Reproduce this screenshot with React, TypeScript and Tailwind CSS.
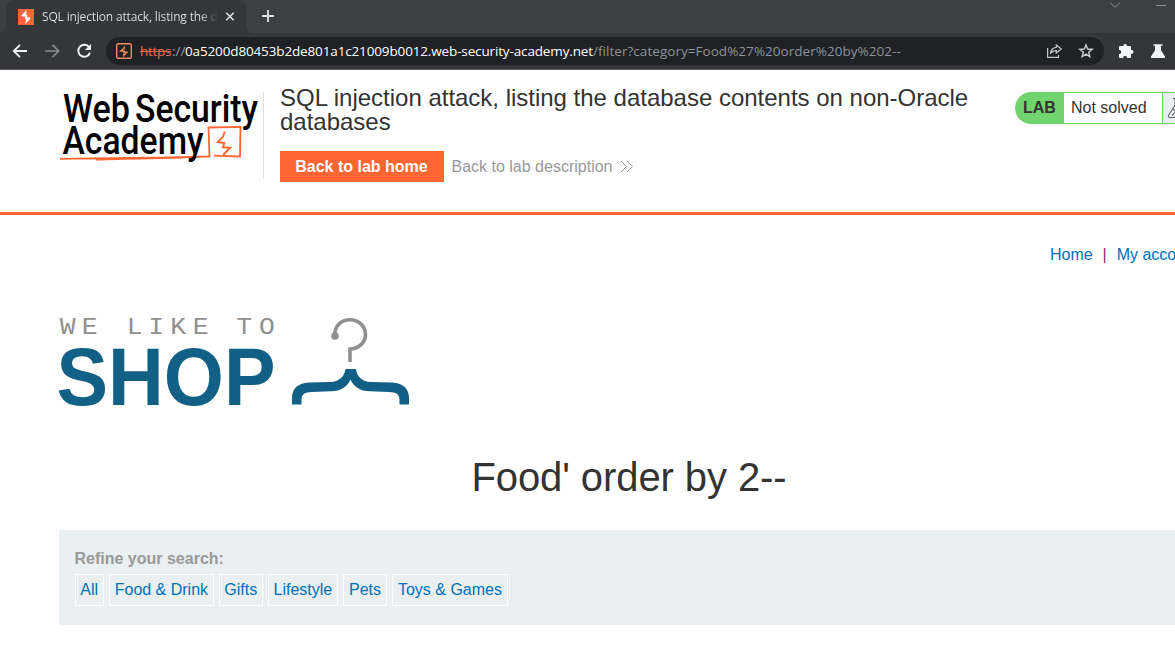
import React from "react";

const categories = [
  { name: "All", width: "w-[29.5px]" },
  { name: "Food & Drink", width: "w-[105px]" },
  { name: "Gifts", width: "w-[44px]" },
  { name: "Lifestyle", width: "w-[70.5px]" },
  { name: "Pets", width: "w-[44px]" },
  { name: "Toys & Games", width: "w-[116px]" },
];

function TabStrip() {
  return (
    <div className="flex h-[33px] bg-[#3c4043]">
      <svg className="h-[33px] w-[6px] shrink-0" viewBox="0 0 6 33">
        <path d="M6 25 C6 30 3 33 -2 33 H6Z" fill="#35363a" />
      </svg>
      <div className="flex h-[33px] w-[240px] shrink-0 items-center rounded-t-lg bg-[#35363a] pl-3">
        <svg className="h-4 w-4 shrink-0" viewBox="0 0 16 16">
          <rect width="16" height="16" fill="#ff6633" />
          <path d="M8.6 1 L3.6 6.2 L4.2 7.6 H7.6 L6.6 9.2 L8 10.2 L7.2 15 L12.4 9.8 L11.8 8.3 H9 L9.6 6.8 L8.2 5.8Z" fill="#fff" />
        </svg>
        <div className="ml-2 h-5 w-[176px] shrink-0 overflow-hidden whitespace-nowrap bg-linear-to-r from-[#dfe1e5] from-90% to-[#35363a] bg-clip-text font-['Open_Sans',sans-serif] text-[12px] leading-[19px] tracking-[-0.16px] text-transparent">
          SQL injection attack, listing the da
        </div>
        <svg className="ml-[7px] h-[10px] w-[10px] shrink-0" viewBox="0 0 10 10">
          <path d="M1.3 .8 L8.7 8.2 M8.7 .8 L1.3 8.2" stroke="#dfe1e5" strokeWidth="1.6" />
        </svg>
      </div>
      <svg className="h-[33px] w-[34px] shrink-0" viewBox="0 0 34 33">
        <path d="M0 25 C0 30 3 33 8 33 H0Z" fill="#35363a" />
        <path d="M16 16 H28 M22 10 V22" stroke="#dfe1e5" strokeWidth="1.8" />
      </svg>
      <svg className="ml-auto h-[33px] w-[70px] shrink-0" viewBox="0 0 70 33" fill="none" stroke="#8d9093" strokeWidth="1">
        <path d="M5 2.5 L10 7.5 L15 2.5 M51 5.5 H61" />
      </svg>
    </div>
  );
}

function Toolbar() {
  return (
    <div className="flex h-[37px] items-center border-b border-[#5c5d60] bg-[#35363a] pl-2">
      <svg className="h-9 w-[98px] shrink-0" viewBox="0 0 98 36" fill="none">
        <path d="M19 18 H6 M12 11.8 L5.8 18 L12 24.2" stroke="#f1f3f4" strokeWidth="1.9" />
        <path d="M37 18 H50 M44.5 11.8 L50.7 18 L44.5 24.2" stroke="#87898c" strokeWidth="1.7" />
        <path d="M81.2 14.2 A6 6 0 1 0 82 19.6" stroke="#f1f3f4" strokeWidth="1.9" />
        <path d="M83 11 V17 H77Z" fill="#f1f3f4" />
      </svg>
      <div className="flex h-7 w-[998px] shrink-0 items-center rounded-full bg-[#202124] pl-[10px] pr-2">
        <svg className="h-4 w-4 shrink-0" viewBox="0 0 16 16" fill="none">
          <rect x=".7" y=".7" width="14.6" height="14.6" rx="1.6" stroke="#f28b5f" strokeWidth="1.4" />
          <path d="M8.5 3.3 L8 5.5 L4.8 8 L8.2 8.2 L8 9 L11 9.2 L7.8 12.6 V10.5" stroke="#f28b5f" strokeWidth="1.4" />
        </svg>
        <div className="ml-2 flex whitespace-nowrap font-['Open_Sans',sans-serif] text-[13.5px] leading-5 text-[#9aa0a6]">
          <span className="w-[32px] shrink-0 tracking-[-0.3px] text-[#ee6c4d] line-through">https</span>
          <span className="w-[13px] shrink-0">://</span>
          <span className="w-[408px] shrink-0 tracking-[-0.14px] text-white">0a5200d80453b2de801a1c21009b0012.web-security-academy.net</span>
          <span className="tracking-[0.04px] text-[#8f9296]">/filter?category=Food%27%20order%20by%202--</span>
        </div>
        <svg className="ml-auto h-4 w-[50px] shrink-0" viewBox="0 0 50 16" fill="none" stroke="#c4c7ca" strokeWidth="1.2">
          <path d="M1.6 5 V14.4 H12.5 V12" />
          <path d="M10.3 2 L15.3 6 L10.3 10 V7.7 C7.5 7.7 5.7 8.7 4.4 10.8 C4.7 7.2 6.7 4.8 10.3 4.4Z" />
          <path d="M40 2 L41.7 6.1 L46.1 6.4 L42.7 9.2 L43.8 13.6 L40 11.2 L36.2 13.6 L37.3 9.2 L33.9 6.4 L38.3 6.1Z" strokeWidth="1.5" />
        </svg>
      </div>
      <svg className="h-9 min-w-0 flex-1" viewBox="0 0 71 36" preserveAspectRatio="xMinYMin" fill="#f1f3f4">
        <path d="M16 13 H19.3 V12.4 A1.9 1.9 0 0 1 23 12.4 V13 H26 Q27 13 27 14 V17 H27.6 A1.9 1.9 0 0 1 27.6 20.8 H27 V24 Q27 25 26 25 H23 V24.6 A1.9 1.9 0 0 0 19.2 24.6 V25 H16 Q15 25 15 24 V20.9 H15.4 A1.9 1.9 0 0 0 15.4 17.1 H15 V14 Q15 13 16 13Z" />
        <path d="M49.5 11.2 H58.5 V12.8 H57 V17.2 L61 23.4 Q61.6 25 60 25 H48 Q46.4 25 47 23.4 L51 17.2 V12.8 H49.5Z" />
      </svg>
    </div>
  );
}

function AcademyLogo() {
  return (
    <svg className="h-[86px] w-[204px] shrink-0" viewBox="0 0 204 86">
      <path d="M0 66.8 C40 65.8 95 66.5 149.5 64.5 L148.5 35.5 L180.5 34.8 L180 64.5 L154 63.6 M36 67.6 C65 66.6 100 66.2 128 65.4" fill="none" stroke="#ff6633" strokeWidth="1.8" />
      <path d="M164.7 39.5 L163.2 44.3 L157.8 50 L164.3 51 L163 55.3 L170.3 55.8 L163.8 62 L164.3 63.5" fill="none" stroke="#ff6633" strokeWidth="1.9" />
      <g fontFamily="Roboto, sans-serif" fontSize="38" fontWeight="500" fill="#000">
        <text x="3" y="29.6" textLength="67" lengthAdjust="spacingAndGlyphs">Web</text>
        <text x="75" y="29.6" textLength="123" lengthAdjust="spacingAndGlyphs">Security</text>
        <text x="2.5" y="61.6" textLength="141" lengthAdjust="spacingAndGlyphs">Academy</text>
      </g>
    </svg>
  );
}

function LabHeader() {
  return (
    <header className="flex h-[145px] shrink-0 items-start border-b-[3px] border-[#ff6633] pl-[60px] pt-[22px]">
      <div className="flex h-[87px] w-[204px] shrink-0 border-r border-[#e0e0e0]">
        <AcademyLogo />
      </div>
      <div className="-mt-[6px] ml-4 w-[710px] shrink-0">
        <h2 className="text-[24px] leading-6 tracking-[-0.01px]">SQL injection attack, listing the database contents on non-Oracle databases</h2>
        <div className="mt-[17px] flex items-center">
          <button className="h-[31px] w-[164px] bg-[#ff6633] pr-px text-base font-bold leading-[31px] text-white">Back to lab home</button>
          <a className="ml-[7.5px] flex items-center whitespace-nowrap text-base text-[#999]">
            Back to lab description
            <svg className="ml-[7.5px] h-3 w-[14px]" viewBox="0 0 14 12" fill="none" stroke="#999" strokeWidth="1">
              <path d="M1 0 L6.5 5.5 L1 11 M7 0 L12.5 5.5 L7 11" />
            </svg>
          </a>
        </div>
      </div>
      <div className="ml-[25px] flex h-8 shrink-0">
        <span className="w-[49px] rounded-l-2xl bg-[#71d36d] pl-2 text-base font-bold leading-8">LAB</span>
        <span className="w-[99px] border-y border-r border-[#71d36d] pl-[7px] text-base leading-[30px]">Not solved</span>
        <span className="flex w-[40px] items-center border-y border-[#71d36d] bg-[#eaeff3] pl-1">
          <svg className="h-[22px] w-5" viewBox="0 0 20 22" fill="none" stroke="#666" strokeWidth="1.1">
            <path d="M6 1.5 H14 M8 2 V8 L1.5 18.5 Q1 20.5 3 20.5 H17 Q19 20.5 18.5 18.5 L12 8 V2 M6 12 L9 14.5 L5 18.5" />
          </svg>
        </span>
      </div>
    </header>
  );
}

function ShopLogo() {
  return (
    <svg className="ml-[58px] mt-[52px] h-[92px] w-[354px] shrink-0" viewBox="0 0 354 92">
      <text
        transform="scale(1.1 1)"
        x="1.5 21.5 42 62.4 82 102 122.4 142 162 182.7"
        y="17.6"
        fontFamily="'Liberation Mono', monospace"
        fontSize="24"
        fill="#8f8f8f"
      >
        WE LIKE TO
      </text>
      <text x="-1.5" y="88.5" fontFamily="'Liberation Sans', sans-serif" fontWeight="bold" fontSize="81" fill="#126086" textLength="219" lengthAdjust="spacingAndGlyphs">SHOP</text>
      <circle cx="277" cy="20" r="3.8" fill="#8f8f8f" />
      <path d="M277 20 C276 10 283 3.8 292 3.8 C301 3.8 307.5 10.5 307.5 18.5 C307.5 27 300 33 292 33 V46" fill="none" stroke="#8f8f8f" strokeWidth="3.6" />
      <path d="M287.5 53 H298 C299 61 304 65.5 313 66 L334 66.5 C346 67.5 351 73 351 82 V88.5 H341.5 V84 C341.5 78 338 76.3 331 76 L312 75.3 C302 75 296 71 292.5 63.5 C289 71 283 75 273 75.3 L254 76 C247 76.3 243.5 78 243.5 84 V88.5 H234 V82 C234 73 239 67.5 251 66.5 L272 66 C281 65.5 286.5 61 287.5 53Z" fill="#126086" />
    </svg>
  );
}

export default function App() {
  return (
    <div className="flex h-[672px] w-[1175px] flex-col overflow-hidden bg-white font-['Liberation_Sans',Arial,sans-serif] text-[#333332]">
      <TabStrip />
      <Toolbar />
      <LabHeader />
      <nav className="ml-[1050px] mt-[30px] flex h-[19px] shrink-0 whitespace-nowrap text-base leading-[19px] text-[#0070b8]">
        <a>Home</a>
        <span className="w-[24px] shrink-0 text-center text-[#80306a]">|</span>
        <a>My account</a>
      </nav>
      <ShopLogo />
      <h1 className="mt-[46px] w-[1258px] shrink-0 text-center text-[40px] leading-[46px] tracking-[-0.08px]">Food' order by 2--</h1>
      <section className="ml-[59px] mt-[30px] h-[95px] shrink-0 bg-[#eaeff2] px-[15.5px] pt-[19px]">
        <h3 className="text-base font-bold leading-[19px] text-[#999]">Refine your search:</h3>
        <div className="mt-[6px] flex gap-[4.9px]">
          {categories.map(({ name, width }) => (
            <a key={name} className={`${width} flex h-8 shrink-0 justify-center whitespace-nowrap border border-white text-base leading-[30px] text-[#0070b8]`}>
              {name}
            </a>
          ))}
        </div>
      </section>
    </div>
  );
}
